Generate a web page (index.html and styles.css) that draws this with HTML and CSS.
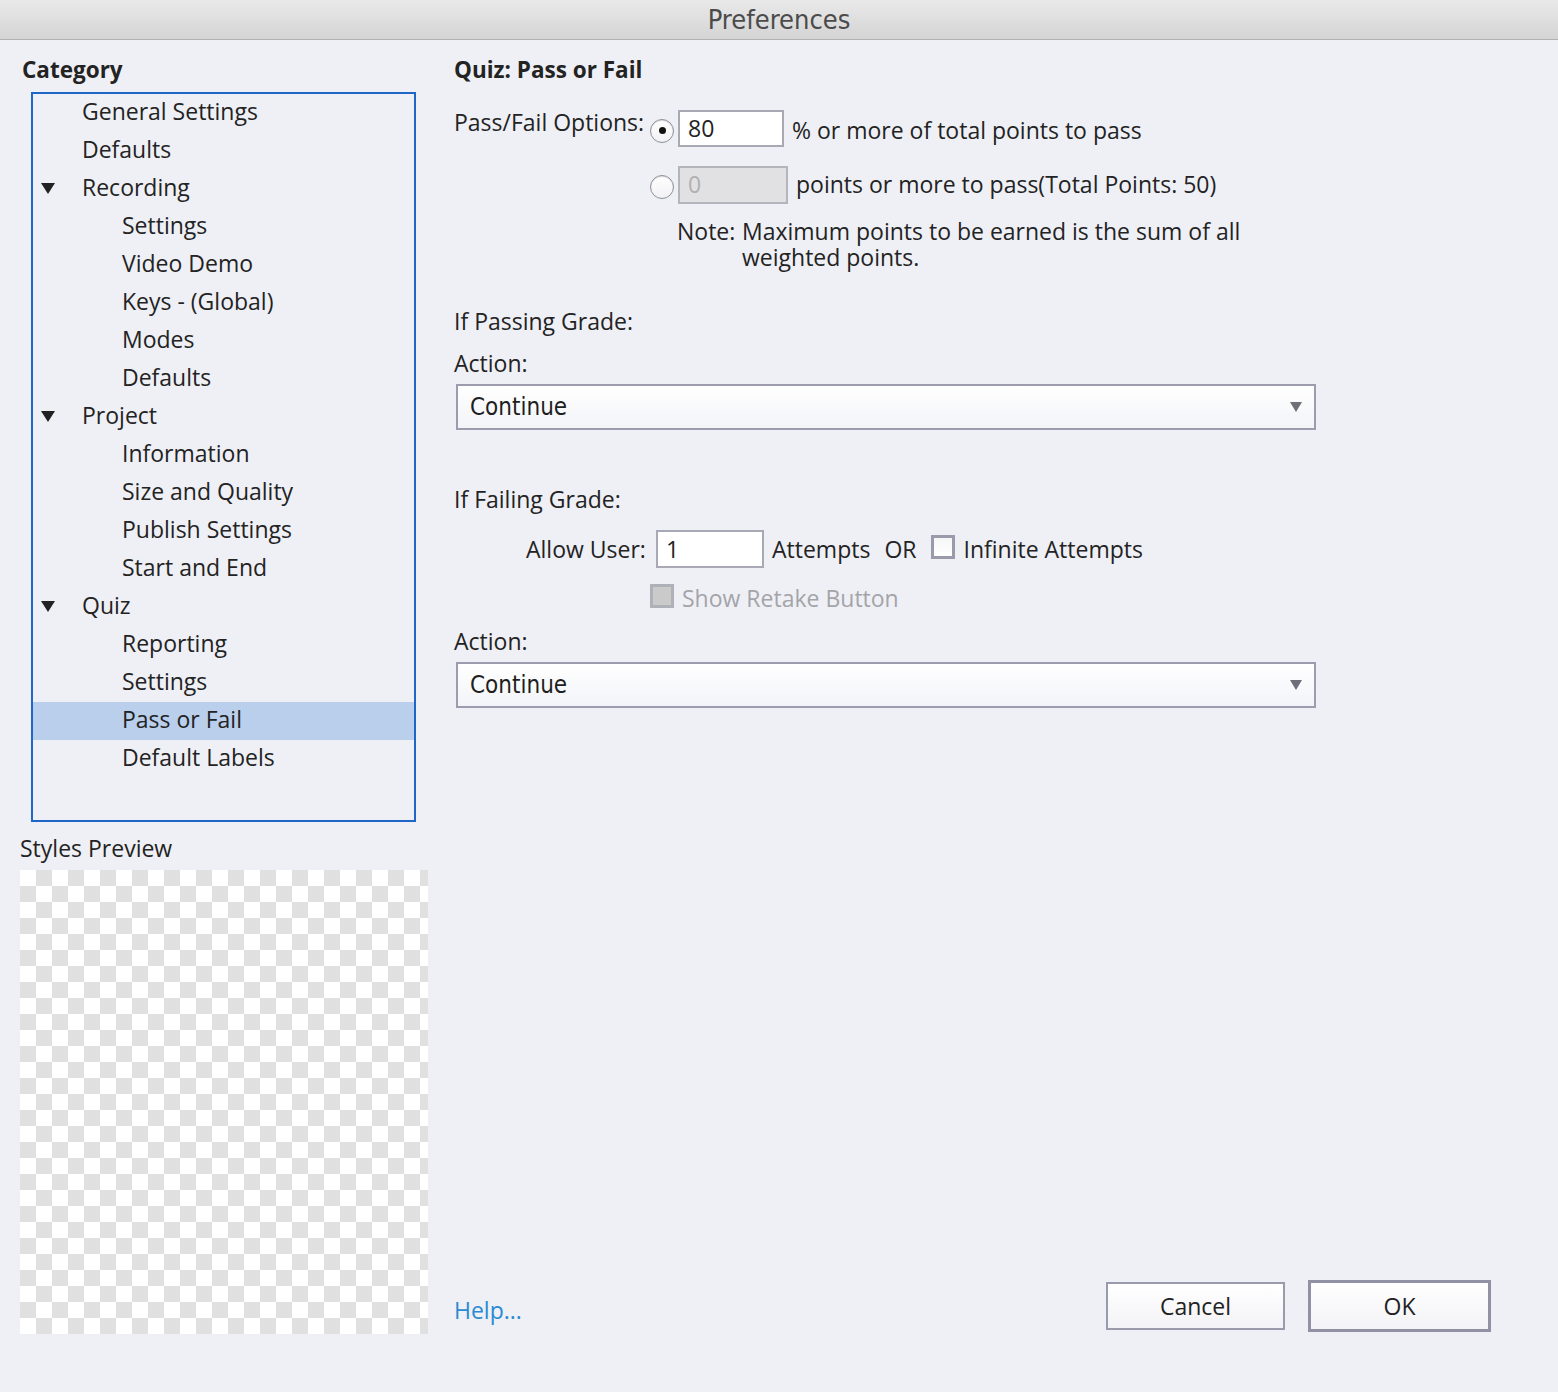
FILE: index.html
```html
<!DOCTYPE html>
<html>
<head>
<meta charset="utf-8">
<link rel="stylesheet" href="styles.css">
</head>
<body>
<div class="window">
  <div class="titlebar">Preferences</div>
  <div class="main">
    <div class="left">
      <div class="heading">Category</div>
      <div class="tree">
        <div class="row l1">General Settings</div>
        <div class="row l1">Defaults</div>
        <div class="row l1"><span class="tri"><svg width="14" height="11" viewBox="0 0 14 11"><path d="M0 0H14L7 11Z" fill="#222"/></svg></span>Recording</div>
        <div class="row l2">Settings</div>
        <div class="row l2">Video Demo</div>
        <div class="row l2">Keys - (Global)</div>
        <div class="row l2">Modes</div>
        <div class="row l2">Defaults</div>
        <div class="row l1"><span class="tri"><svg width="14" height="11" viewBox="0 0 14 11"><path d="M0 0H14L7 11Z" fill="#222"/></svg></span>Project</div>
        <div class="row l2">Information</div>
        <div class="row l2">Size and Quality</div>
        <div class="row l2">Publish Settings</div>
        <div class="row l2">Start and End</div>
        <div class="row l1"><span class="tri"><svg width="14" height="11" viewBox="0 0 14 11"><path d="M0 0H14L7 11Z" fill="#222"/></svg></span>Quiz</div>
        <div class="row l2">Reporting</div>
        <div class="row l2">Settings</div>
        <div class="row l2 selected">Pass or Fail</div>
        <div class="row l2">Default Labels</div>
      </div>
      <div class="preview-label">Styles Preview</div>
      <div class="checker"></div>
    </div>
    <div class="right">
      <div class="heading">Quiz: Pass or Fail</div>
      <div class="pf-row first">
        <div class="pf-label">Pass/Fail Options:</div>
        <span class="radio checked"></span>
        <div class="field pct">80</div>
        <div class="pf-text">% or more of total points to pass</div>
      </div>
      <div class="pf-row second">
        <div class="pf-label"></div>
        <span class="radio"></span>
        <div class="field disabled">0</div>
        <div class="pf-text">points or more to pass(Total Points: 50)</div>
      </div>
      <div class="note">
        <div class="note-key">Note:</div>
        <div class="note-text">
          <div class="note-line">Maximum points to be earned is the sum of all</div>
          <div class="note-line">weighted points.</div>
        </div>
      </div>
      <div class="label pass-grade">If Passing Grade:</div>
      <div class="label action">Action:</div>
      <div class="select"><span class="sel-text">Continue</span><span class="arrow"></span></div>
      <div class="label fail-grade">If Failing Grade:</div>
      <div class="allow-row">
        <div class="allow-label">Allow User:</div>
        <div class="field attempts">1</div>
        <div class="allow-text">Attempts</div>
        <div class="allow-or">OR</div>
        <span class="checkbox"></span>
        <div class="allow-text">Infinite Attempts</div>
      </div>
      <div class="retake-row">
        <span class="checkbox grey"></span>
        <div class="retake-text">Show Retake Button</div>
      </div>
      <div class="label action2">Action:</div>
      <div class="select"><span class="sel-text">Continue</span><span class="arrow"></span></div>
      <div class="footer">
        <div class="help">Help...</div>
        <div class="buttons">
          <div class="btn cancel">Cancel</div>
          <div class="btn ok">OK</div>
        </div>
      </div>
    </div>
  </div>
</div>
</body>
</html>
```

FILE: styles.css
```css
html, body {
  margin: 0;
  padding: 0;
}
body {
  width: 1558px;
  height: 1392px;
  overflow: hidden;
  background: #eff0f6;
  font-family: "Open Sans", "DejaVu Sans", sans-serif;
  font-size: 23px;
  color: #232323;
}
.window {
  display: flex;
  flex-direction: column;
  height: 1392px;
}
.titlebar {
  height: 39px;
  border-bottom: 1px solid #b3b3b3;
  background: linear-gradient(#e9e9e9, #d4d4d4);
  text-align: center;
  line-height: 39px;
  font-family: "DejaVu Sans Condensed", "DejaVu Sans", sans-serif;
  font-size: 27px;
  color: #4b4b4b;
}
.main {
  display: flex;
  flex: 1;
}
.left {
  width: 434px;
  padding-left: 20px;
  padding-top: 15px;
  display: flex;
  flex-direction: column;
}
.heading {
  font-weight: 700;
  line-height: 30px;
  height: 30px;
  padding-left: 2px;
  font-size: 22.5px;
}
.tree {
  margin-top: 7px;
  margin-left: 11px;
  width: 381px;
  height: 726px;
  border: 2px solid #1f66c9;
}
.row {
  height: 38px;
  box-sizing: border-box;
  padding-bottom: 4px;
  display: flex;
  align-items: center;
  white-space: nowrap;
}
.row.l1 { padding-left: 49px; }
.row.l2 { padding-left: 89px; }
.row .tri {
  width: 14px;
  height: 11px;
  display: inline-flex;
  margin-left: -41px;
  margin-right: 27px;
  position: relative;
  top: 1px;
}
.row.selected {
  background: #b9cfec;
}
.preview-label {
  margin-top: 11px;
  line-height: 30px;
  height: 30px;
}
.checker {
  margin-top: 7px;
  width: 408px;
  height: 464px;
  background: repeating-conic-gradient(#e0e0e0 0 25%, #ffffff 0 50%) 0 0 / 32px 32px;
}
.right {
  flex: 1;
  padding-top: 15px;
  display: flex;
  flex-direction: column;
  padding-right: 67px;
}
.right .heading { padding-left: 0; }
.pf-row {
  display: flex;
  align-items: center;
}
.pf-row.first { margin-top: 25px; height: 37px; }
.pf-row.second { margin-top: 19px; height: 38px; }
.pf-label {
  width: 196px;
  flex: none;
  position: relative;
  top: -7px;
  white-space: nowrap;
}
.radio {
  width: 22px;
  height: 22px;
  border-radius: 50%;
  border: 1px solid #8f8f9a;
  background: linear-gradient(#ffffff, #f1f1f4);
  box-shadow: inset 0 1px 1px rgba(0,0,0,0.15);
  flex: none;
  position: relative;
  margin-top: 4px;
  margin-right: 4px;
}
.radio.checked::after {
  content: "";
  position: absolute;
  width: 7px;
  height: 7px;
  border-radius: 50%;
  background: #111;
  left: 7.5px;
  top: 7.5px;
}
.field {
  width: 92px;
  height: 33px;
  border: 2px solid #a9a9b6;
  background: #fff;
  padding-left: 8px;
  line-height: 33px;
  flex: none;
  box-sizing: content-box;
}
.field.pct { width: 94px; }
.field.disabled {
  background: #e1e1e4;
  color: #b0b0b0;
  border-color: #b4b4bc;
  width: 98px;
  height: 34px;
  padding-left: 8px;
}
.pf-text {
  margin-left: 8px;
  white-space: nowrap;
  position: relative;
  top: 1px;
}
.pf-row.second .pf-text { top: -1px; }
.note {
  display: flex;
  margin-top: 14px;
  margin-left: 223px;
}
.note-key { width: 65px; line-height: 26px; height: 26px; }
.note-line {
  height: 26px;
  line-height: 26px;
  overflow: visible;
  white-space: nowrap;
}
.label {
  line-height: 30px;
  height: 30px;
}
.pass-grade { margin-top: 36px; }
.action { margin-top: 12px; }
.select {
  margin-top: 6px;
  margin-left: 2px;
  width: 856px;
  height: 42px;
  border: 2px solid #9c9cae;
  background: linear-gradient(#ffffff, #f3f4f8);
  display: flex;
  align-items: center;
  justify-content: space-between;
  box-sizing: content-box;
}
.sel-text {
  padding-left: 12px;
  font-family: "DejaVu Sans Condensed", "DejaVu Sans", sans-serif;
  font-size: 24px;
  color: #1e1e1e;
}
.arrow {
  width: 0;
  height: 0;
  border-left: 6px solid transparent;
  border-right: 6px solid transparent;
  border-top: 10px solid #6e6e78;
  margin-right: 12px;
}
.fail-grade { margin-top: 54px; }
.allow-row {
  display: flex;
  align-items: center;
  margin-top: 16px;
  height: 38px;
}
.allow-label {
  margin-left: 72px;
  width: 130px;
  white-space: nowrap;
}
.field.attempts {
  width: 96px;
  height: 34px;
  line-height: 34px;
  padding-left: 8px;
}
.allow-text { margin-left: 8px; white-space: nowrap; }
.allow-or { margin-left: 14px; margin-right: 15px; }
.checkbox {
  width: 18px;
  height: 18px;
  border: 3px solid #9a9aab;
  background: linear-gradient(#f6f6f8, #ffffff);
  flex: none;
  margin-top: -4px;
}
.checkbox.grey {
  background: #cacaca;
  border-color: #b0b0b8;
}
.retake-row {
  display: flex;
  align-items: center;
  margin-top: 15px;
  margin-left: 196px;
  height: 30px;
}
.retake-text {
  margin-left: 8px;
  color: #a4a4a8;
}
.action2 { margin-top: 13px; }
.footer {
  margin-top: auto;
  margin-bottom: 60px;
  display: flex;
  align-items: center;
  justify-content: space-between;
}
.help {
  color: #2a8bd2;
  position: relative;
  top: 4px;
}
.buttons {
  display: flex;
  align-items: center;
  gap: 23px;
}
.btn {
  display: flex;
  align-items: center;
  justify-content: center;
  background: linear-gradient(#ffffff, #f3f3f7);
  color: #222;
}
.btn.cancel {
  width: 175px;
  height: 44px;
  border: 2px solid #9a9aad;
}
.btn.ok {
  width: 177px;
  height: 46px;
  border: 3px solid #9191a6;
}
```
